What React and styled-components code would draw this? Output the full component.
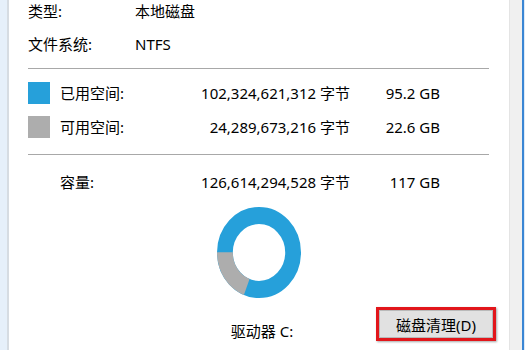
import React from "react";
import styled, { createGlobalStyle } from "styled-components";

const GlobalStyle = createGlobalStyle`
  html, body {
    margin: 0;
    padding: 0;
    background: #ffffff;
  }
  body {
    font-family: "Noto Sans", "Noto Sans CJK SC", sans-serif;
    font-size: 15px;
    color: #000000;
  }
`;

const USED = 102324621312;
const FREE = 24289673216;
const TOTAL = 126614294528;

const Window = styled.div`
  display: flex;
  width: 525px;
  height: 350px;
  overflow: hidden;
`;

const LeftEdge = styled.div`
  width: 7px;
  background: #e6f0fa;
  border-right: 2px solid #d6dce2;
`;

const RightEdge = styled.div`
  width: 12px;
  background: #f0f0f0;
  border-left: 1px solid #e4e4e4;
  border-right: 2px solid #3a86d4;
`;

const Tail = styled.div`
  width: 1px;
  background: #dfeaf6;
`;

const Content = styled.div`
  flex: 1;
  display: flex;
  flex-direction: column;
  padding-left: 19px;
`;

const InfoRow = styled.div`
  display: flex;
  height: 22px;
  line-height: 22px;
  margin-top: ${(p) => p.$top || 0}px;
`;

const InfoLabel = styled.span`
  width: 107px;
`;

const Divider = styled.div`
  height: 1px;
  background: #a8a8a8;
  margin: ${(p) => p.$top}px 20px 0 0;
`;

const SpaceRow = styled.div`
  display: grid;
  grid-template-columns: 22px 10px 140px 150px 90px;
  align-items: center;
  height: 22px;
  line-height: 22px;
  margin-top: ${(p) => p.$top}px;
`;

const Swatch = styled.div`
  width: 22px;
  height: 22px;
  background: ${(p) => p.$color};
`;

const SpaceLabel = styled.span`
  grid-column: 3;
`;

const Bytes = styled.span`
  grid-column: 4;
  text-align: right;
`;

const Size = styled.span`
  grid-column: 5;
  text-align: right;
`;

const ChartBox = styled.div`
  display: flex;
  justify-content: center;
  margin: 14px 20px 0 0;
`;

const Footer = styled.div`
  display: grid;
  grid-template-columns: 1fr auto 1fr;
  align-items: start;
  margin: 9px 13px 0 0;
`;

const DriveLabel = styled.span`
  grid-column: 2;
  line-height: 22px;
  margin-top: 13px;
`;

const Highlight = styled.div`
  justify-self: end;
  width: 114px;
  height: 28px;
  border: 3px solid #e2161b;
  box-shadow: 1px 1px 2px rgba(0, 0, 0, 0.35);
`;

const CleanButton = styled.button`
  width: 100%;
  height: 100%;
  border: 1px solid #b9b9b9;
  background: #e1e1e1;
  font-family: "Noto Sans", "Noto Sans CJK SC", sans-serif;
  font-size: 15px;
  color: #000000;
  padding: 0;
`;

const Donut = ({ free, total }) => {
  const r = 40.6;
  const c = 2 * Math.PI * r;
  const deg = (free / total) * 360;
  const start = 180 - deg;
  return (
    <svg width="84" height="91" viewBox="0 0 100 100" preserveAspectRatio="none">
      <circle cx="50" cy="50" r={r} fill="none" stroke="#26a0da" strokeWidth="18.8" />
      <circle
        cx="50"
        cy="50"
        r={r}
        fill="none"
        stroke="#adadad"
        strokeWidth="18.8"
        strokeDasharray={`${(deg / 360) * c} ${c}`}
        strokeDashoffset={-(start / 360) * c}
      />
    </svg>
  );
};

const fmt = (n) => n.toLocaleString("en-US") + " 字节";

export default function App() {
  return (
    <>
      <GlobalStyle />
      <Window>
        <LeftEdge />
        <Content>
          <InfoRow>
            <InfoLabel>类型:</InfoLabel>
            <span>本地磁盘</span>
          </InfoRow>
          <InfoRow $top={11}>
            <InfoLabel>文件系统:</InfoLabel>
            <span>NTFS</span>
          </InfoRow>
          <Divider $top={13} />
          <SpaceRow $top={13}>
            <Swatch $color="#26a0da" />
            <SpaceLabel>已用空间:</SpaceLabel>
            <Bytes>{fmt(USED)}</Bytes>
            <Size>95.2 GB</Size>
          </SpaceRow>
          <SpaceRow $top={12}>
            <Swatch $color="#adadad" />
            <SpaceLabel>可用空间:</SpaceLabel>
            <Bytes>{fmt(FREE)}</Bytes>
            <Size>22.6 GB</Size>
          </SpaceRow>
          <Divider $top={16} />
          <SpaceRow $top={16}>
            <SpaceLabel>容量:</SpaceLabel>
            <Bytes>{fmt(TOTAL)}</Bytes>
            <Size>117 GB</Size>
          </SpaceRow>
          <ChartBox>
            <Donut free={FREE} total={TOTAL} />
          </ChartBox>
          <Footer>
            <DriveLabel>驱动器 C:</DriveLabel>
            <Highlight>
              <CleanButton>磁盘清理(D)</CleanButton>
            </Highlight>
          </Footer>
        </Content>
        <RightEdge />
        <Tail />
      </Window>
    </>
  );
}
